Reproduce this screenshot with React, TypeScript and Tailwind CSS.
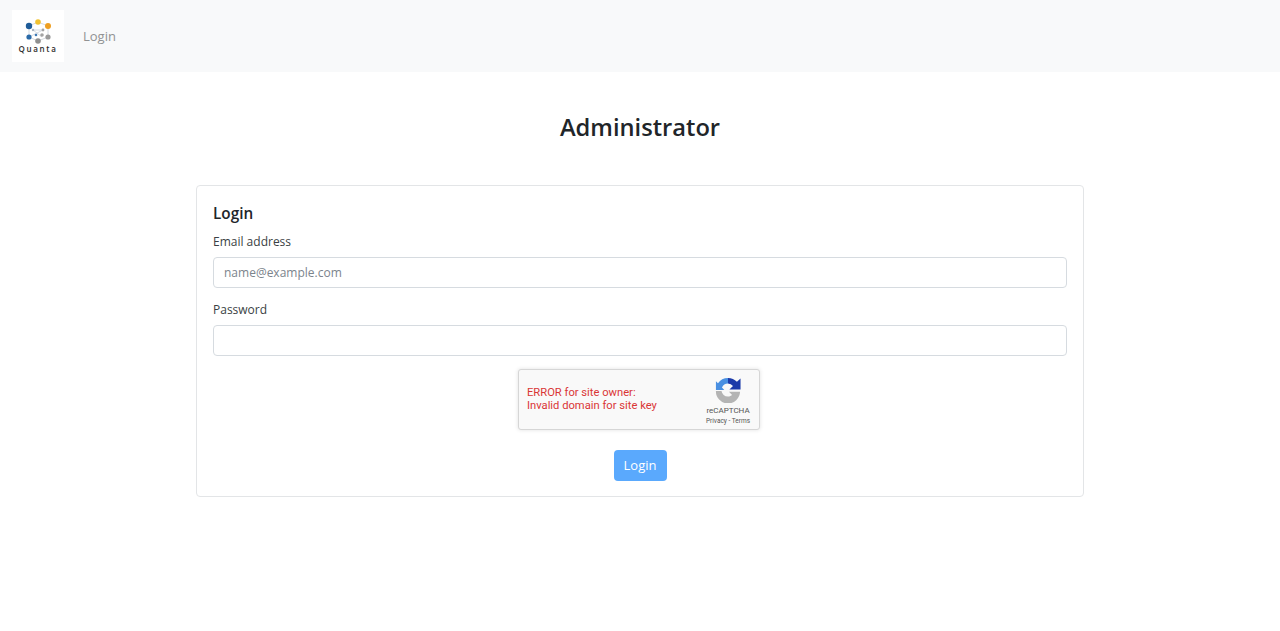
const font = "font-['Open_Sans','Noto_Sans',sans-serif]";

function QuantaLogo() {
  const links = [
    [17, 16, 26, 12],
    [26, 12, 36, 16],
    [36, 16, 36, 27],
    [36, 27, 26, 31],
    [17, 27, 26, 31],
    [17, 16, 17, 27],
    [21, 20, 31, 20],
    [17, 27, 31, 20],
    [21, 20, 30, 27],
  ];
  return (
    <div className="flex h-[52px] w-[52px] shrink-0 flex-col items-center bg-white">
      <svg width="52" height="35" viewBox="0 0 52 35" className="mb-[-1px]">
        {links.map(([a, b, c, d], i) => (
          <line key={i} x1={a} y1={b} x2={c} y2={d} stroke="#c9d1da" strokeWidth="0.8" />
        ))}
        <circle cx="17" cy="16" r="3.2" fill="#1f5c99" />
        <circle cx="26" cy="12" r="2.8" fill="#f2c230" />
        <circle cx="36" cy="16" r="3" fill="#ee9f22" />
        <circle cx="17" cy="27" r="2.6" fill="#2a6aa8" />
        <circle cx="21" cy="20" r="1.2" fill="#a9b4c0" />
        <circle cx="31" cy="20" r="1.4" fill="#a4a4a4" />
        <circle cx="24" cy="25" r="1.3" fill="#3f7ab5" />
        <circle cx="30" cy="25" r="1.8" fill="#a4a4a4" />
        <circle cx="36" cy="27" r="2.6" fill="#9a9a9a" />
        <circle cx="26" cy="31" r="2.8" fill="#8f8f8f" />
      </svg>
      <span className="text-[8px] leading-[10px] font-semibold tracking-[1.7px] text-[#2d2d2d]">Quanta</span>
    </div>
  );
}

function RecaptchaIcon() {
  return (
    <svg width="26" height="26" viewBox="0 0 28 28">
      <path d="M14 1 A13 13 0 0 0 3.2 6.8 L1 4.5 V14 H10 L7.5 11.4 A7.5 7.5 0 0 1 14 7 Z" fill="#4a90e2" />
      <path d="M14 1 A13 13 0 0 1 23.6 5.2 L27.5 1.5 V13.5 H15.5 L19.4 9.6 A7.5 7.5 0 0 0 14 7 Z" fill="#1c3aa9" />
      <path d="M1 15 H7 A7.5 7.5 0 0 0 14 21 C16 21 17.2 20.4 18.4 19.4 L15 16 H27 A13 13 0 0 1 1 15 Z" fill="#b4b4b4" />
    </svg>
  );
}

export default function App() {
  return (
    <div className={`${font} min-h-[631px] bg-white text-[#212529]`}>
      <nav className="flex h-[72px] items-center bg-[#f8f9fa] pr-3 pl-3">
        <QuantaLogo />
        <a className="mt-[2px] ml-[19px] text-[13px] text-[#919293]">Login</a>
      </nav>
      <main className="mx-auto w-[888px]">
        <h1 className="mt-[37px] mb-[40px] text-center text-[23.7px] leading-[36px] font-semibold">Administrator</h1>
        <section className="h-[312px] rounded border border-[#e3e5e7] px-4 pt-[16px]">
          <h2 className="text-[15.3px] leading-[22px] font-semibold">Login</h2>
          <label className="mt-[8px] block text-[12px] leading-[20px] text-[#3a3f44]">Email address</label>
          <input
            placeholder="name@example.com"
            className="mt-[5px] block h-[30.5px] w-full rounded border border-[#d6dbe0] px-[10px] text-[12px] placeholder:text-[#7b848c]"
          />
          <label className="mt-[12.5px] block text-[12px] leading-[20px] text-[#3a3f44]">Password</label>
          <input className="mt-[5px] block h-[30.5px] w-full rounded border border-[#d6dbe0] px-[10px] text-[12px]" />
          <div className="mt-[13.5px] flex justify-center">
            <div className="mr-[2px] flex h-[61px] w-[242px] justify-between rounded-[3px] border border-[#d6d6d6] bg-[#f9f9f9] shadow-[0_0_4px_rgba(0,0,0,0.12)] font-['Roboto',sans-serif]">
              <p className="mt-[16px] ml-2 text-[11.2px] leading-[13px] text-[#d93636]">
                ERROR for site owner:
                <br />
                Invalid domain for site key
              </p>
              <div className="mr-2 flex w-[46px] flex-col items-center pt-[7px] text-[#555]">
                <RecaptchaIcon />
                <span className="mt-[3px] text-[8px] leading-[10px]">reCAPTCHA</span>
                <span className="text-[6.5px] leading-[10px]">Privacy - Terms</span>
              </div>
            </div>
          </div>
          <div className="mt-[20px] flex justify-center">
            <button className="h-[31px] w-[53px] rounded bg-[#5aa9fd] text-[13px] font-medium text-white">Login</button>
          </div>
        </section>
      </main>
    </div>
  );
}
